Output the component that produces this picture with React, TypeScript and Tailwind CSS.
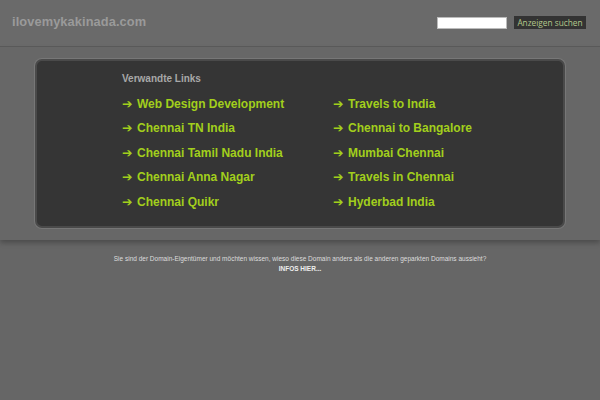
import React from "react";

const left = ["Web Design Development", "Chennai TN India", "Chennai Tamil Nadu India", "Chennai Anna Nagar", "Chennai Quikr"];
const right = ["Travels to India", "Chennai to Bangalore", "Mumbai Chennai", "Travels in Chennai", "Hyderbad India"];

function LinkItem({ text }: { text: string }) {
  return (
    <div className="h-[24.5px] flex items-center text-[12px] font-bold text-[#a2cf1c] whitespace-nowrap">
      <span className="text-[12.5px] font-bold mr-[3px] w-[12px] inline-block font-['DejaVu_Sans',sans-serif] leading-none">➔</span>
      <span>{text}</span>
    </div>
  );
}

export default function App() {
  return (
    <div className="w-[600px] h-[400px] bg-[#666666] overflow-hidden font-['Liberation_Sans',Arial,sans-serif]">
      <div className="h-[47px] bg-[#6a6a6a] border-b border-[#5b5b5b] flex items-center justify-between pl-[12px] pr-[14px]">
        <div className="text-[12.8px] font-bold text-[#9a9a9a] font-['Liberation_Sans',sans-serif] tracking-[0.1px] -mt-[2px]">ilovemykakinada.com</div>
        <div className="flex items-center gap-[7px] -mt-[1px]">
          <div className="w-[70px] h-[12px] bg-white border border-[#bbb]" />
          <div className="h-[13px] w-[72px] text-center bg-[#333333] text-[#b4c88c] text-[8.3px] leading-[13px] font-['Open_Sans',sans-serif] whitespace-nowrap">Anzeigen suchen</div>
        </div>
      </div>
      <div className="bg-[#676767] pt-[12px] pb-[12px] shadow-[0_3px_5px_rgba(0,0,0,0.25)] relative">
        <div className="mx-[35px] h-[169px] rounded-[7px] bg-[#353535] border-2 border-[#4a4a4a] shadow-[0_0_0_1px_#777] pl-[85px] pt-[11px]">
          <div className="text-[10px] font-bold text-[#a8a8a8] h-[14px] leading-[14px]">Verwandte Links</div>
          <div className="flex mt-[5.5px]">
            <div className="w-[211px]">
              {left.map((t) => (
                <LinkItem key={t} text={t} />
              ))}
            </div>
            <div>
              {right.map((t) => (
                <LinkItem key={t} text={t} />
              ))}
            </div>
          </div>
        </div>
      </div>
      <div className="text-center text-[#dddddd] pt-[14px] font-['Liberation_Sans',Arial,sans-serif]">
        <div className="text-[6.5px] leading-[10px]">Sie sind der Domain-Eigentümer und möchten wissen, wieso diese Domain anders als die anderen geparkten Domains aussieht?</div>
        <div className="text-[6.5px] leading-[10px] font-bold text-[#eeeeee]">INFOS HIER...</div>
      </div>
    </div>
  );
}
